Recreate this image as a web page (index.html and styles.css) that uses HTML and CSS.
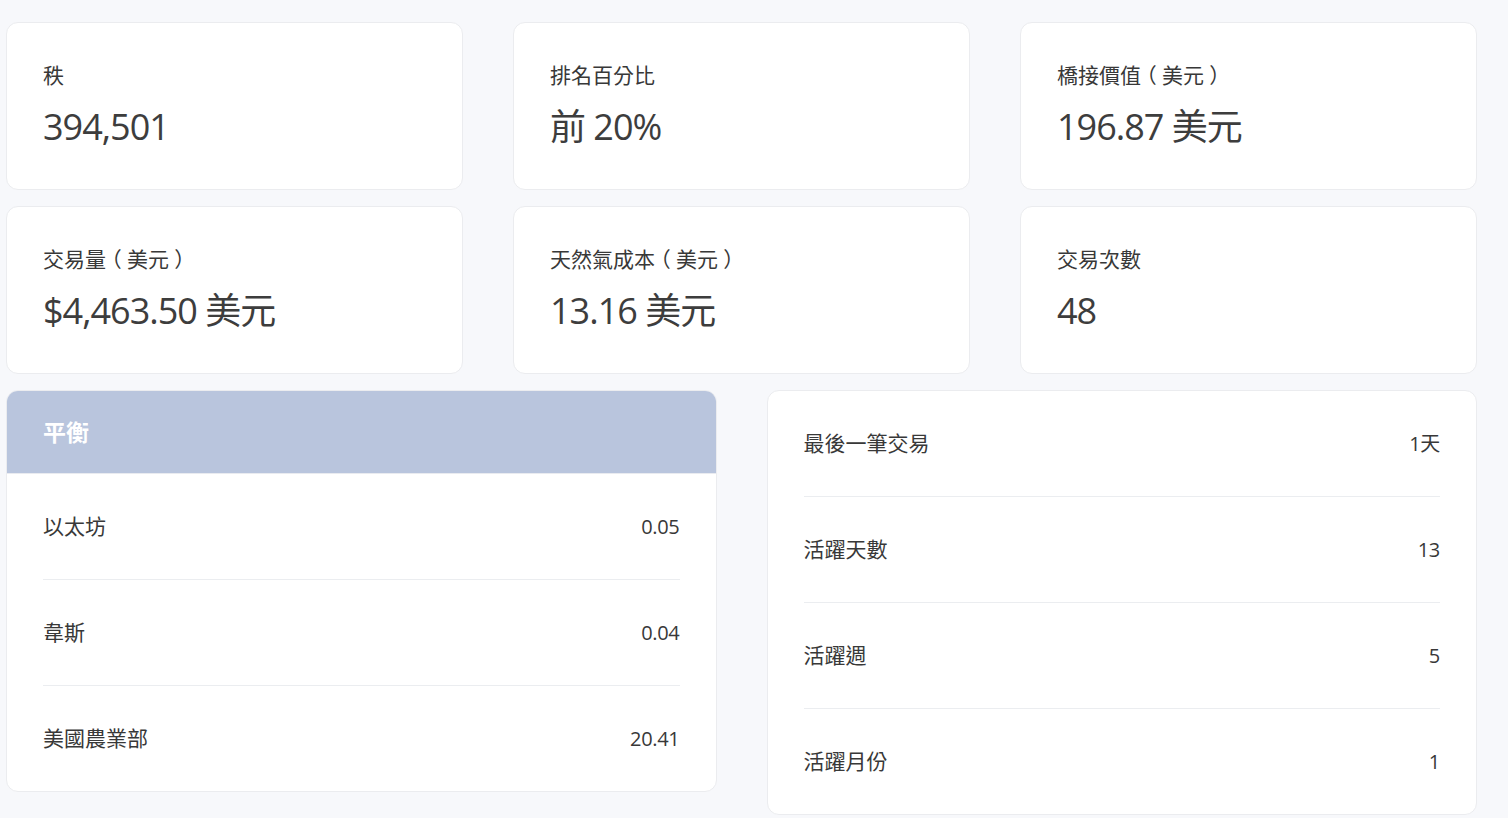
FILE: index.html
```html
<!DOCTYPE html>
<html lang="zh-Hant">
<head>
<meta charset="utf-8">
<title>Stats</title>
<link rel="stylesheet" href="styles.css">
</head>
<body>
<main class="page">
  <section class="stats">
    <div class="card stat"><div class="stat-label">秩</div><div class="stat-value">394,501</div></div>
    <div class="card stat"><div class="stat-label">排名百分比</div><div class="stat-value">前 20%</div></div>
    <div class="card stat"><div class="stat-label">橋接價值<span class="paren">（</span>美元<span class="paren">）</span></div><div class="stat-value">196.87 美元</div></div>
    <div class="card stat"><div class="stat-label">交易量<span class="paren">（</span>美元<span class="paren">）</span></div><div class="stat-value">$4,463.50 美元</div></div>
    <div class="card stat"><div class="stat-label">天然氣成本<span class="paren">（</span>美元<span class="paren">）</span></div><div class="stat-value">13.16 美元</div></div>
    <div class="card stat"><div class="stat-label">交易次數</div><div class="stat-value">48</div></div>
  </section>
  <section class="lists">
    <div class="card list">
      <div class="list-head">平衡</div>
      <div class="list-body">
        <div class="row"><span class="row-label">以太坊</span><span class="row-value">0.05</span></div>
        <div class="row"><span class="row-label">韋斯</span><span class="row-value">0.04</span></div>
        <div class="row"><span class="row-label">美國農業部</span><span class="row-value">20.41</span></div>
      </div>
    </div>
    <div class="card list">
      <div class="list-body">
        <div class="row"><span class="row-label">最後一筆交易</span><span class="row-value">1天</span></div>
        <div class="row"><span class="row-label">活躍天數</span><span class="row-value">13</span></div>
        <div class="row"><span class="row-label">活躍週</span><span class="row-value">5</span></div>
        <div class="row"><span class="row-label">活躍月份</span><span class="row-value">1</span></div>
      </div>
    </div>
  </section>
</main>
</body>
</html>
```
FILE: styles.css
```css
html, body {
  margin: 0;
  padding: 0;
  background: #f7f8fb;
}
body {
  font-family: "Open Sans", "Noto Sans CJK TC", sans-serif;
  color: #333;
}
.page {
  width: 1471px;
  padding: 22px 0 0 6px;
  display: flex;
  flex-direction: column;
  gap: 16px;
}
.card {
  background: #fff;
  border: 1px solid #ebecef;
  border-radius: 12px;
  box-sizing: border-box;
}
.stats {
  display: grid;
  grid-template-columns: repeat(3, 1fr);
  column-gap: 50px;
  row-gap: 16px;
}
.stat {
  padding: 37px 36px 0;
  height: 168px;
}
.stat-label {
  font-size: 21px;
  line-height: 30px;
  color: #383838;
  margin-bottom: 15px;
}
.paren {
  font-feature-settings: "halt" 1;
  padding: 0 0.25em;
}
.stat-value {
  font-size: 36px;
  line-height: 44px;
  letter-spacing: -1px;
  color: #3d3d3d;
}
.lists {
  display: grid;
  grid-template-columns: 1fr 1fr;
  column-gap: 50px;
  align-items: start;
}
.list {
  overflow: hidden;
}
.list-head {
  background: #b9c5dd;
  color: #fff;
  font-weight: 700;
  font-size: 23px;
  line-height: 26px;
  padding: 28px 36px;
  border-bottom: 1px solid #e9ebf0;
}
.list-body {
  padding: 0 36px;
}
.row {
  display: flex;
  justify-content: space-between;
  align-items: center;
  line-height: 25px;
  padding: 40px 0;
  color: #383838;
  border-bottom: 1px solid #ebedf0;
}
.row:last-child {
  border-bottom: none;
}
.row-label {
  font-size: 21px;
}
.row-value {
  font-size: 20px;
  letter-spacing: -0.3px;
}
```
